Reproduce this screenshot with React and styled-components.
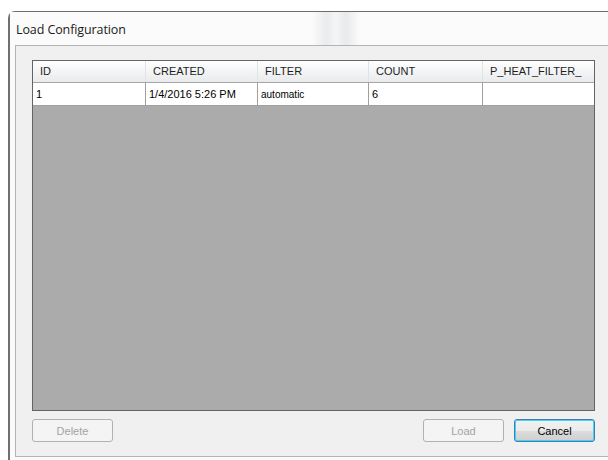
import styled, { createGlobalStyle } from 'styled-components';

const GlobalStyle = createGlobalStyle`
  html, body {
    margin: 0;
    padding: 0;
    background: #ffffff;
    overflow: hidden;
  }
`;

const columns = [
  { key: 'id', label: 'ID', width: 113 },
  { key: 'created', label: 'CREATED', width: 112 },
  { key: 'filter', label: 'FILTER', width: 111 },
  { key: 'count', label: 'COUNT', width: 114 },
  { key: 'heat', label: 'P_HEAT_FILTER_', width: 112 },
];

const rows = [
  { id: '1', created: '1/4/2016 5:26 PM', filter: 'automatic', count: '6', heat: '' },
];

const template = columns.map((c) => `${c.width}px`).join(' ');

const App = () => {
  return (
    <Page>
      <GlobalStyle />
      <Window>
        <TitleBar>
          <Title>Load Configuration</Title>
        </TitleBar>
        <Client>
          <Grid>
            <HeaderRow>
              {columns.map((c) => (
                <HeaderCell key={c.key}>{c.label}</HeaderCell>
              ))}
            </HeaderRow>
            {rows.map((r) => (
              <DataRow key={r.id}>
                {columns.map((c) => (
                  <Cell key={c.key} $small={c.key === 'filter'}>
                    {r[c.key]}
                  </Cell>
                ))}
              </DataRow>
            ))}
          </Grid>
          <ButtonBar>
            <Button disabled>Delete</Button>
            <Spacer />
            <Button disabled>Load</Button>
            <Button $default>Cancel</Button>
          </ButtonBar>
        </Client>
      </Window>
    </Page>
  );
};

export default App;

const Page = styled.div`
  padding: 11px 0 0 8px;
  height: 460px;
  box-sizing: border-box;
`;

const Window = styled.div`
  height: 100%;
  border-top: 1px solid #6e6e6e;
  border-left: 2px solid #707070;
  border-top-left-radius: 7px;
  background: #fafafa;
  display: flex;
  flex-direction: column;
  padding: 0 0 3px 5px;
  box-sizing: border-box;
`;

const TitleBar = styled.div`
  height: 33px;
  display: flex;
  align-items: center;
  margin-left: -5px;
  padding-left: 6px;
  background: linear-gradient(
    90deg,
    #fbfbfb 0px,
    #fbfbfb 302px,
    #e9ebed 316px,
    #f4f5f6 326px,
    #e7e9eb 336px,
    #fbfbfb 350px,
    #fbfbfb 100%
  );
`;

const Title = styled.span`
  font-family: 'Open Sans', 'Liberation Sans', sans-serif;
  font-size: 12.5px;
  letter-spacing: -0.1px;
  color: #1a1a1a;
  padding-top: 1px;
`;

const Client = styled.div`
  flex: 1;
  background: #f0f0f0;
  border-top: 1px solid #b4b4b4;
  border-left: 1px solid #b4b4b4;
  border-bottom: 1px solid #b4b4b4;
  padding: 14px 13px 0 16px;
  display: flex;
  flex-direction: column;
  gap: 8px;
`;

const Grid = styled.div`
  height: 351px;
  box-sizing: border-box;
  border: 1px solid #646464;
  background: #ababab;
  overflow: hidden;
`;

const HeaderRow = styled.div`
  display: grid;
  grid-template-columns: ${template};
  height: 21px;
  background: linear-gradient(#ffffff, #f3f4f5 50%, #e8eaec);
  border-bottom: 1px solid #a6a6a6;
`;

const HeaderCell = styled.div`
  font-family: 'Liberation Sans', Arial, sans-serif;
  font-size: 11px;
  color: #1e1e1e;
  padding: 4px 0 0 7px;
  border-right: 1px solid #e0e2e4;
  white-space: nowrap;
  overflow: hidden;
`;

const DataRow = styled.div`
  display: grid;
  grid-template-columns: ${template};
  height: 22px;
  background: #ffffff;
  border-bottom: 1px solid #a0a0a0;
`;

const Cell = styled.div`
  font-family: 'Liberation Sans', Arial, sans-serif;
  font-size: ${(p) => (p.$small ? '10px' : '11px')};
  color: #000000;
  padding: ${(p) => (p.$small ? '6px 0 0 3px' : '5px 0 0 3px')};
  border-right: 1px solid #a0a0a0;
  white-space: nowrap;
  overflow: hidden;
`;

const ButtonBar = styled.div`
  display: flex;
  gap: 10px;
`;

const Spacer = styled.div`
  flex: 1;
`;

const Button = styled.button`
  width: 81px;
  height: 23px;
  box-sizing: border-box;
  font-family: 'Liberation Sans', Arial, sans-serif;
  font-size: 11px;
  border-radius: 3px;
  padding: 0;
  border: 1px solid ${(p) => (p.$default ? '#3c7fb1' : '#adb2b5')};
  color: ${(p) => (p.disabled ? '#a3a3a3' : '#000000')};
  background: ${(p) =>
    p.disabled
      ? '#f4f4f4'
      : 'linear-gradient(#f2f2f2, #ebebeb 50%, #dddddd 51%, #cfcfcf)'};
  box-shadow: ${(p) => (p.$default ? 'inset 0 0 0 1px #48d1f6' : 'none')};
`;
